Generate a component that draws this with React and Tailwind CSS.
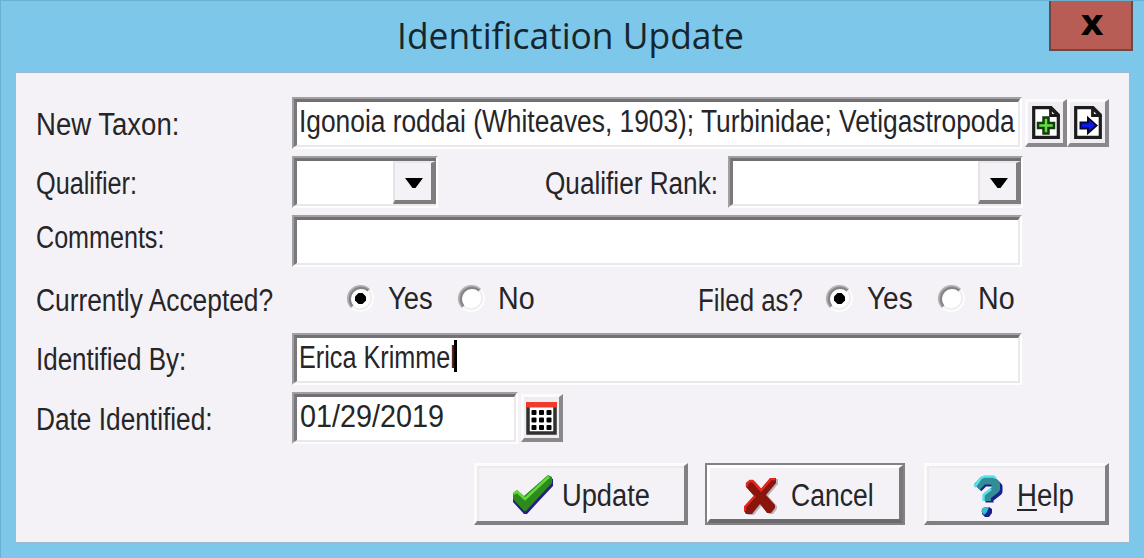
import { useLayoutEffect, useRef } from "react";

/* Condenses its text horizontally so that it fills the wrapper's width. */
function Fit({ className = "", children }) {
  const box = useRef(null);
  const ink = useRef(null);
  useLayoutEffect(() => {
    const fit = () => {
      const w = ink.current.offsetWidth;
      ink.current.style.transform = `scaleX(${box.current.clientWidth / w})`;
    };
    fit();
    document.fonts?.ready.then(fit);
  }, []);
  return (
    <span ref={box} className={`block shrink-0 whitespace-nowrap ${className}`}>
      <span ref={ink} className="inline-block origin-left">{children}</span>
    </span>
  );
}

function Sunken({ className = "", children }) {
  return (
    <div className={`flex h-[52px] shrink-0 border-2 border-t-[#a09fa1] border-l-[#a09fa1] border-r-white border-b-[#fdfdfe] ${className}`}>
      <div className="flex min-w-0 grow border-t-[3px] border-l-[3px] border-r-2 border-b-2 border-t-[#727073] border-l-[#7a787b] border-r-[#e9e8eb] border-b-[#e9e8eb] bg-white">
        {children}
      </div>
    </div>
  );
}

function Combo({ className }) {
  return (
    <div className={`flex h-[52px] shrink-0 border-2 border-t-[#a09fa1] border-l-[#a09fa1] border-r-white border-b-[#fdfdfe] ${className}`}>
      <div className="flex min-w-0 grow border-t-[3px] border-l-[3px] border-b-2 border-t-[#727073] border-l-[#7a787b] border-b-[#e9e8eb] bg-white">
        <div className="grow" />
        <div className="flex h-[43px] w-[43px] shrink-0 items-center justify-center border-t-2 border-l-2 border-r-[5px] border-b-[4px] border-t-[#e9e8eb] border-l-[#e4e3e6] border-r-[#7f7d80] border-b-[#7f7d80] bg-[#f4f2f6]">
          <svg width="18" height="10" viewBox="0 0 18 10" className="mt-[3px] ml-px"><path d="M0 0H18L10.500 10H7.500Z" fill="#000" /></svg>
        </div>
      </div>
    </div>
  );
}

function ToolButton({ children, className = "" }) {
  return (
    <div className={`flex h-[48px] w-[42px] shrink-0 items-center justify-center border-t-[3px] border-l-[3px] border-r-[4px] border-b-[4px] border-t-[#fcfcfd] border-l-[#fcfcfd] border-r-[#8a888b] border-b-[#8a888b] bg-[#efedf1] ${className}`}>
      {children}
    </div>
  );
}

function Page({ children }) {
  return (
    <svg width="28" height="33" viewBox="0 0 28 33" className="shrink-0">
      <path d="M1.700 1.700H19L26.300 9V31.300H1.700Z" fill="#fff" stroke="#1c1c1c" strokeWidth="3.200" />
      <path d="M18.500 2V9.500H26Z" fill="#ddd" stroke="#1c1c1c" strokeWidth="2.800" />
      {children}
    </svg>
  );
}

function Radio({ on, className = "" }) {
  return (
    <svg width="29" height="29" viewBox="0 0 29 29" className={`mt-[10px] shrink-0 ${className}`}>
      <circle cx="14.500" cy="14.500" r="12.300" fill="#fff" stroke="#fcfcfd" strokeWidth="2.500" />
      <path d="M5.800 23.200A12.300 12.300 0 0 1 23.200 5.800" fill="none" stroke="#b1afb2" strokeWidth="2.600" />
      <path d="M6.600 22.400A11.200 11.200 0 0 1 22.400 6.600" fill="none" stroke="#858386" strokeWidth="2.200" />
      <path d="M22.400 6.600A11.200 11.200 0 0 1 6.600 22.400" fill="none" stroke="#ecebee" strokeWidth="1.500" />
      {on && <path d="M12.500 9H16.500L20 12.500V16.500L16.500 20H12.500L9 16.500V12.500Z" fill="#000" />}
    </svg>
  );
}

function Label({ width, top, children }) {
  return (
    <div className={`w-[256px] shrink-0 ${top}`}>
      <Fit className={width}>{children}</Fit>
    </div>
  );
}

function PushButton({ className, children }) {
  return (
    <div className={`flex h-[62px] shrink-0 border-t-[3px] border-l-[3px] border-r-[4px] border-b-[4px] border-t-[#fcfcfd] border-l-[#fcfcfd] border-r-[#817f82] border-b-[#817f82] ${className}`}>
      <div className="flex grow border-t-2 border-l-2 border-[#ebeaed]">{children}</div>
    </div>
  );
}

export default function App() {
  return (
    <div className="flex h-[558px] w-[1144px] flex-col overflow-hidden border-t border-l border-[#6bb0d0] bg-[#7dc7eb] font-['Liberation_Sans',sans-serif] text-[31px] leading-[40px] text-[#262528]">
      <header className="flex h-[71px] shrink-0">
        <div className="flex w-[1048px] shrink-0 justify-center pt-[8px]">
          <Fit className="ml-[90px] w-[347px] font-['Open_Sans',sans-serif] text-[37px] leading-[51px] text-[#16262e]">Identification Update</Fit>
        </div>
        <button className="flex h-[50px] w-[84px] justify-center border-2 border-t-0 border-[#6c4743] bg-[#b85d55] pl-[2px] font-['DejaVu_Sans',sans-serif] text-[36px] leading-[44px] font-bold text-black">x</button>
      </header>
      <main className="ml-[15px] flex h-[471px] w-[1113px] flex-col border-t border-b border-[#9db9cf] bg-[#f4f2f6] pt-[24px] pl-[20px]">
        <div className="flex h-[59px]">
          <Label width="w-[143px]" top="pt-[8px]">New Taxon:</Label>
          <Sunken className="w-[730px]">
            <Fit className="ml-[2px] w-[716px]">Igonoia roddai (Whiteaves, 1903); Turbinidae; Vetigastropoda</Fit>
          </Sunken>
          <ToolButton className="mt-[2px] ml-[3px]">
            <Page>
              <path d="M11.500 11.500H16.500V17H22V22H16.500V27.500H11.500V22H6V17H11.500Z" fill="#64dc45" stroke="#143b0c" strokeWidth="2.500" />
            </Page>
          </ToolButton>
          <ToolButton className="mt-[2px]">
            <Page>
              <path d="M6.500 16.500H14V12L22.500 19.500L14 27V22.500H6.500Z" fill="#0b18ee" stroke="#05083a" strokeWidth="2" />
            </Page>
          </ToolButton>
        </div>
        <div className="flex h-[59px]">
          <Label width="w-[101px]" top="pt-[8px]">Qualifier:</Label>
          <Combo className="w-[146px]" />
          <Fit className="mt-[8px] ml-[107px] w-[173px]">Qualifier Rank:</Fit>
          <Combo className="ml-[10px] w-[295px]" />
        </div>
        <div className="flex h-[59px]">
          <Label width="w-[128px]" top="pt-[3px]">Comments:</Label>
          <Sunken className="w-[730px]" />
        </div>
        <div className="flex h-[59px]">
          <Label width="w-[237px]" top="pt-[7px]">Currently Accepted?</Label>
          <Radio on className="ml-[54px]" />
          <Fit className="mt-[5px] ml-[13px] w-[45px]">Yes</Fit>
          <Radio className="ml-[24px]" />
          <Fit className="mt-[5px] ml-[12px] w-[37px]">No</Fit>
          <Fit className="mt-[7px] ml-[163px] w-[105px]">Filed as?</Fit>
          <Radio on className="ml-[22px]" />
          <Fit className="mt-[5px] ml-[13px] w-[46px]">Yes</Fit>
          <Radio className="ml-[24px]" />
          <Fit className="mt-[5px] ml-[12px] w-[37px]">No</Fit>
        </div>
        <div className="flex h-[59px]">
          <Label width="w-[150px]" top="pt-[7px]">Identified By:</Label>
          <Sunken className="w-[730px]">
            <Fit className="ml-[2px] w-[157px]">Erica Krimmel</Fit>
            <div className="mt-[2px] -ml-[2px] h-[32px] w-[3px] bg-black" />
          </Sunken>
        </div>
        <div className="flex h-[71px]">
          <Label width="w-[177px]" top="pt-[8px]">Date Identified:</Label>
          <Sunken className="w-[226px]">
            <Fit className="ml-[3px] w-[144px]">01/29/2019</Fit>
          </Sunken>
          <ToolButton className="mt-[2px] ml-[3px]">
            <svg width="31" height="33" viewBox="0 0 31 33" className="mt-px shrink-0">
              <rect x="2" y="2" width="27" height="29" fill="#fff" stroke="#303030" strokeWidth="3.500" />
              <rect x="0" y="0" width="31" height="5.500" fill="#ef3a2c" />
              {[8, 15.500, 23].map((y) => [5.500, 13, 20.500].map((x) => (
                <rect key={`${x}-${y}`} x={x} y={y} width="5" height="5" rx="1" fill="#000" />
              )))}
            </svg>
          </ToolButton>
        </div>
        <div className="flex h-[62px] pl-[438px]">
          <PushButton className="w-[214px]">
            <svg width="42" height="40" viewBox="0 0 42 40" className="mt-[7px] ml-[33px] shrink-0">
              <path d="M1 20L5 17L12 23L36 2L41 4V11L26 27L15 39H12L1 27Z" fill="#22227f" />
              <path d="M1 18L5 15L12 21L36 0L40 2V8L25 24L14 36H12L1 24Z" fill="#2e8a1c" />
              <path d="M1.500 19L5 16.500L13 24L37 1.500" fill="none" stroke="#5fdc3c" strokeWidth="2.600" />
            </svg>
            <Fit className="mt-[8px] ml-[8px] w-[88px]">Update</Fit>
          </PushButton>
          <div className="ml-[17px] flex h-[62px] w-[200px] shrink-0 border-2 border-[#838184]">
            <div className="flex grow border-t-[3px] border-l-[3px] border-r-[4px] border-b-[4px] border-t-white border-l-white border-r-[#7a787b] border-b-[#6c6a6d]">
              <svg width="35" height="38" viewBox="0 0 35 38" className="mt-[10px] ml-[34px] shrink-0">
                <path d="M2 5L6 2H9L17 11L26 0H32V5L22 17L31 27V30L27 35H23L16 26L8 36H2L0 33V29L10 18L2 9Z" fill="#77777b" transform="translate(2 1)" opacity=".5" />
                <path d="M2 5L6 2H9L17 11L26 0H32V5L22 17L31 27V30L27 35H23L16 26L8 36H2L0 33V29L10 18L2 9Z" fill="#8a150d" />
                <path d="M3 8.500V5.500L6 3H8.500L17 12.500L27 1H31.500M11 18L1 29V33" fill="none" stroke="#e7261d" strokeWidth="2.400" />
              </svg>
              <Fit className="mt-[8px] ml-[12px] w-[83px]">Cancel</Fit>
            </div>
          </div>
          <PushButton className="ml-[19px] w-[185px]">
            <svg width="30" height="43" viewBox="0 0 30 43" className="mt-[7px] ml-[44px] shrink-0">
              <path d="M4 12L10 6H20L24 10V15L15 22V26" fill="none" stroke="#17228b" strokeWidth="8" strokeLinejoin="round" transform="translate(1.500 1.500)" />
              <path d="M4 12L10 5.500H19L23 9V14L14 21V26" fill="none" stroke="#328d96" strokeWidth="8" strokeLinejoin="round" />
              <path d="M1.500 12L8 3L12 1.500H20L23 3M18 14L10.500 20V26" fill="none" stroke="#55e5ec" strokeWidth="2.400" />
              <path d="M9 34L12 32H16L19 34V38L16 42H12L9 39Z" fill="#17228b" />
              <path d="M8 36L11 32H16L14 37L11 40Z" fill="#38bfcb" />
            </svg>
            <Fit className="mt-[8px] ml-[14px] w-[57px]"><span className="underline decoration-[2px] underline-offset-[3px]">H</span>elp</Fit>
          </PushButton>
        </div>
      </main>
    </div>
  );
}
